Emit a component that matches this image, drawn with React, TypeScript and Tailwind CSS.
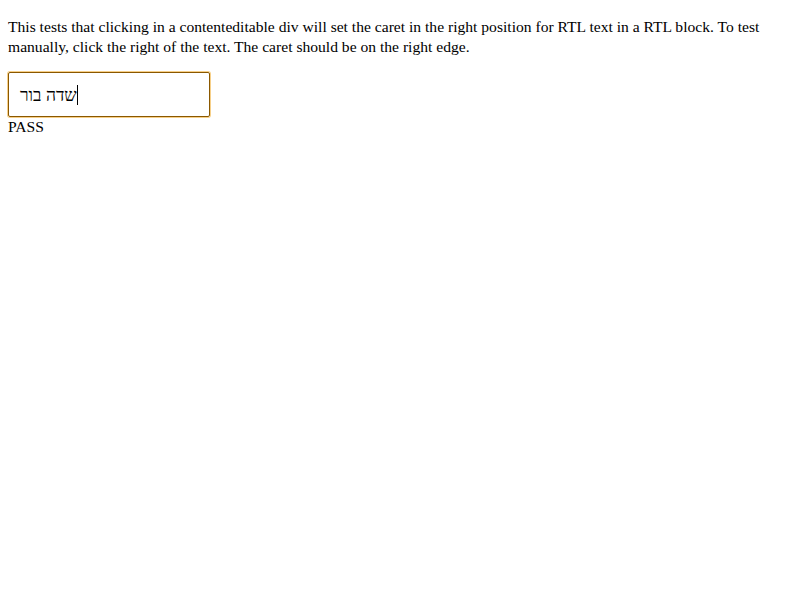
export default function App() {
  return (
    <div className="px-2 py-4 bg-white text-black" style={{ fontFamily: '"Liberation Serif", "DejaVu Serif", serif' }}>
      <p className="text-[15.6px] leading-[20px] pt-px">
        This tests that clicking in a contenteditable div will set the caret in the right position for RTL text in a RTL block. To test manually, click the right of the text. The caret should be on the right edge.
      </p>
      <div className="mt-[15px] w-[202px] h-[45px] border border-[#8a5800] rounded-[2px] px-[11px] flex items-center shadow-[0_0_0_1px_rgba(240,170,40,0.55)]">
        <span className="text-[17.5px] leading-[22px]" dir="rtl" style={{ fontFamily: '"Liberation Serif", "DejaVu Serif", serif' }}>שדה בור</span>
        <span className="w-px h-[20px] bg-black"></span>
      </div>
      <div className="text-[15.6px] leading-[20px]">PASS</div>
    </div>
  );
}
